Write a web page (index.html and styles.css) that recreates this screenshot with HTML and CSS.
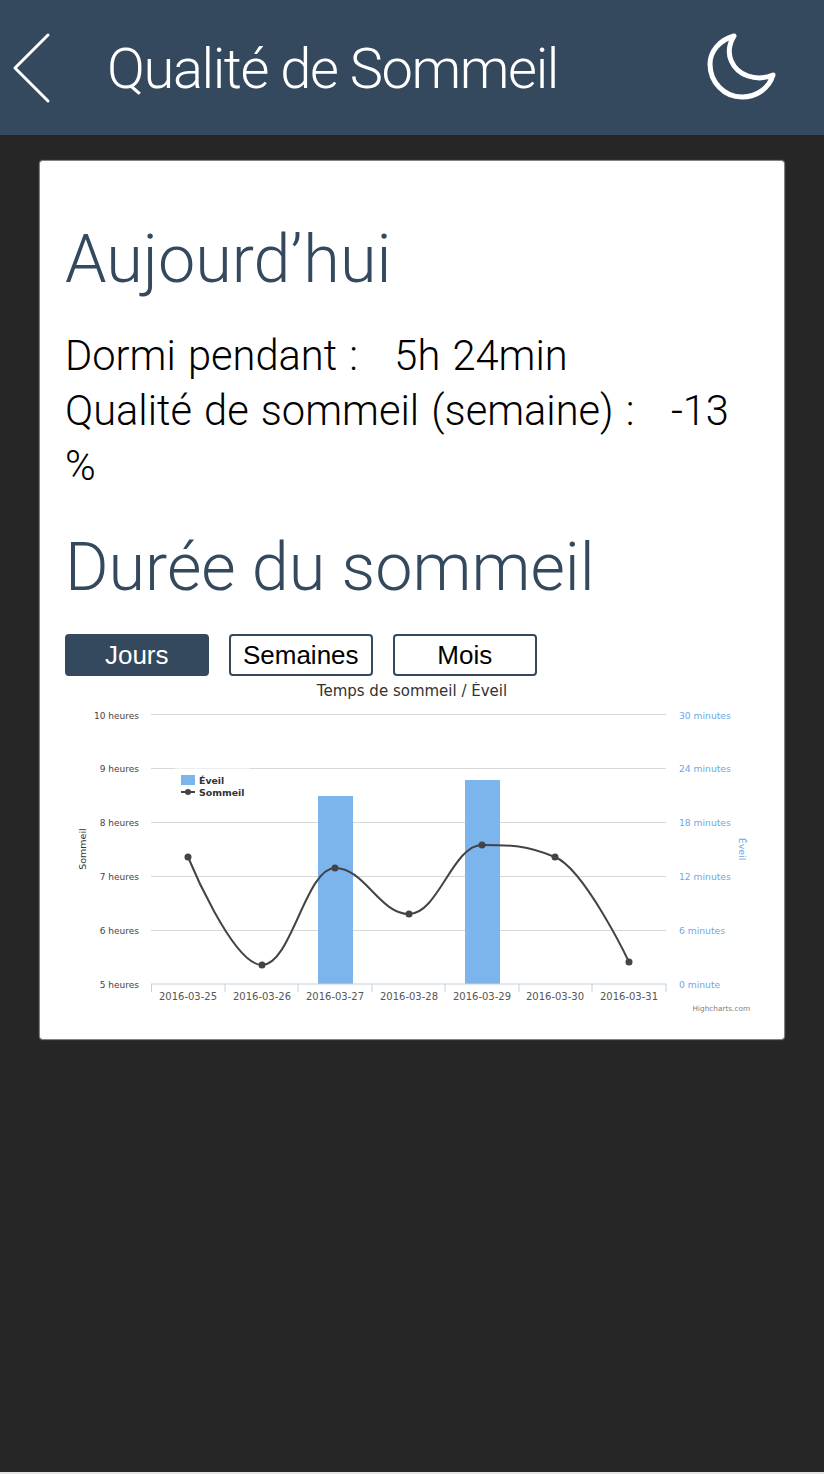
FILE: index.html
```html
<!DOCTYPE html>
<html lang="fr">
<head>
  <meta charset="UTF-8">
  <title>Qualité de Sommeil</title>
  <link rel="stylesheet" href="styles.css">
</head>
<body>

  <header class="top-bar">
    <svg class="back-icon" viewBox="0 0 40 72" width="40" height="72">
      <path d="M36 3 L3 36 L36 69"/>
    </svg>
    <h1>Qualité de Sommeil</h1>
    <svg class="moon-icon" viewBox="704 32 76 72" width="76" height="72">
      <path d="M734 36 C719 40 710 52 710 64 C710 82 724 97 742 97 C757 97 769 88 773 75 C766 78 757 79 748 76 C733 71 723 54 734 36 Z"/>
    </svg>
  </header>

  <main class="card">
    <h2>Aujourd’hui</h2>
    <p class="stats">
      Dormi pendant :&nbsp;&nbsp; 5h 24min<br>
      Qualité de sommeil (semaine) :&nbsp;&nbsp; -13 %
    </p>

    <h2 class="second">Durée du sommeil</h2>

    <div class="tabs">
      <button class="tab active">Jours</button>
      <button class="tab">Semaines</button>
      <button class="tab">Mois</button>
    </div>

    <svg class="chart" viewBox="65 682 700 340" width="700" height="340">
      <text class="chart-title" x="412" y="696">Temps de sommeil / Éveil</text>

      <g class="grid">
        <path d="M151 714.500H666"/>
        <path d="M151 768.500H666"/>
        <path d="M151 822.500H666"/>
        <path d="M151 876.500H666"/>
        <path d="M151 930.500H666"/>
      </g>

      <rect class="bar" x="318" y="796" width="35" height="188"/>
      <rect class="bar" x="465" y="780" width="35" height="204"/>

      <path class="axis" d="M151 984H666M151.500 984V992M225 984V992M298 984V992M372 984V992M445 984V992M519 984V992M592 984V992M666 984V992"/>

      <path class="line" d="M188 857 C188 857 232.400 965 262 965 C291.200 965 305.800 868 335 868 C364.600 868 379.400 914 409 914 C438.200 914 452.800 845 482 845 C511.200 845 525.800 845 555 857 C584.600 869 629 962 629 962"/>
      <g class="dots">
        <circle cx="188" cy="857" r="3.500"/>
        <circle cx="262" cy="965" r="3.500"/>
        <circle cx="335" cy="868" r="3.500"/>
        <circle cx="409" cy="914" r="3.500"/>
        <circle cx="482" cy="845" r="3.500"/>
        <circle cx="555" cy="857" r="3.500"/>
        <circle cx="629" cy="962" r="3.500"/>
      </g>

      <g class="left-labels">
        <text x="139" y="719">10 heures</text>
        <text x="139" y="772">9 heures</text>
        <text x="139" y="826">8 heures</text>
        <text x="139" y="880">7 heures</text>
        <text x="139" y="934">6 heures</text>
        <text x="139" y="988">5 heures</text>
      </g>

      <g class="right-labels">
        <text x="679" y="719">30 minutes</text>
        <text x="679" y="772">24 minutes</text>
        <text x="679" y="826">18 minutes</text>
        <text x="679" y="880">12 minutes</text>
        <text x="679" y="934">6 minutes</text>
        <text x="679" y="988">0 minute</text>
      </g>

      <g class="x-labels">
        <text x="188" y="1000">2016-03-25</text>
        <text x="262" y="1000">2016-03-26</text>
        <text x="335" y="1000">2016-03-27</text>
        <text x="409" y="1000">2016-03-28</text>
        <text x="482" y="1000">2016-03-29</text>
        <text x="555" y="1000">2016-03-30</text>
        <text x="629" y="1000">2016-03-31</text>
      </g>

      <text class="axis-name" transform="translate(86 849) rotate(-90)">Sommeil</text>
      <text class="axis-name blue" transform="translate(739 849) rotate(90)">Éveil</text>

      <rect class="legend-bg" x="175" y="768.500" width="75" height="33"/>
      <rect class="bar" x="181" y="775" width="14" height="10"/>
      <text class="legend-text" x="199" y="784">Éveil</text>
      <path class="line" d="M181 792H195"/>
      <circle class="legend-dot" cx="188" cy="792" r="3"/>
      <text class="legend-text" x="199" y="796">Sommeil</text>

      <text class="credit" x="750" y="1011">Highcharts.com</text>
    </svg>
  </main>

</body>
</html>
```

FILE: styles.css
```css
body {
  font-family: 'Roboto', sans-serif;
  background-color: #262626;
  margin: 0;
  min-height: 1474px;
  box-sizing: border-box;
  border-bottom: 2px solid #e4e4e4;
}

.top-bar {
  background: #34495e;
  height: 135px;
  display: flex;
  align-items: center;
  padding: 0 44px 0 12px;
}

.top-bar h1 {
  flex: 1;
  margin: 3px 0 0 55px;
  color: #ffffff;
  font-size: 56px;
  font-weight: 300;
  letter-spacing: -1.400px;
}

.back-icon path,
.moon-icon path {
  fill: none;
  stroke: #ffffff;
  stroke-linecap: round;
  stroke-linejoin: round;
}

.back-icon path {
  stroke-width: 3;
}

.moon-icon path {
  stroke-width: 5;
}

.card {
  background: #ffffff;
  margin: 26px 40px 0;
  padding: 50px 25px 18px;
  border-radius: 3px;
  box-shadow: 0 0 1px 1px #8c8c8c;
  height: 810px;
}

h2 {
  margin: 0;
  color: #34495e;
  font-size: 66.500px;
  font-weight: 300;
  line-height: 96px;
}

h2.second {
  margin-top: 26px;
}

.stats {
  margin: 21px 0 0;
  font-size: 41.600px;
  font-weight: 300;
  line-height: 55px;
  word-spacing: 2px;
  color: #000000;
}

.tabs {
  display: flex;
  gap: 20.500px;
  margin-top: 19px;
}

.tab {
  width: 143.500px;
  height: 42px;
  padding: 0;
  background: #ffffff;
  border: 2px solid #34495e;
  border-radius: 4px;
  color: #000000;
  font-family: 'Liberation Sans', sans-serif;
  font-size: 26px;
}

.tab.active {
  background: #34495e;
  color: #ffffff;
}

.chart {
  display: block;
  margin-top: 6px;
  font-family: 'DejaVu Sans', sans-serif;
}

.chart-title {
  font-size: 15px;
  text-anchor: middle;
  fill: #333333;
}

.grid path {
  stroke: #d8d8d8;
  stroke-width: 1;
}

.bar {
  fill: #7cb5ec;
}

.axis {
  fill: none;
  stroke: #c0d0e0;
  stroke-width: 1;
}

.line {
  fill: none;
  stroke: #434348;
  stroke-width: 2;
}

.dots circle,
.legend-dot {
  fill: #434348;
}

.left-labels text {
  font-size: 9px;
  text-anchor: end;
  fill: #444444;
}

.x-labels text {
  font-size: 10px;
  text-anchor: middle;
  fill: #555555;
}

.right-labels text {
  font-size: 9.200px;
  fill: #6ba8ea;
}

.axis-name {
  font-size: 9.500px;
  text-anchor: middle;
  fill: #333333;
}

.axis-name.blue {
  fill: #6ba8ea;
}

.legend-bg {
  fill: #ffffff;
}

.legend-text {
  font-size: 9.400px;
  font-weight: bold;
  fill: #333333;
}

.credit {
  font-size: 7.300px;
  text-anchor: end;
  fill: #808080;
}
```
